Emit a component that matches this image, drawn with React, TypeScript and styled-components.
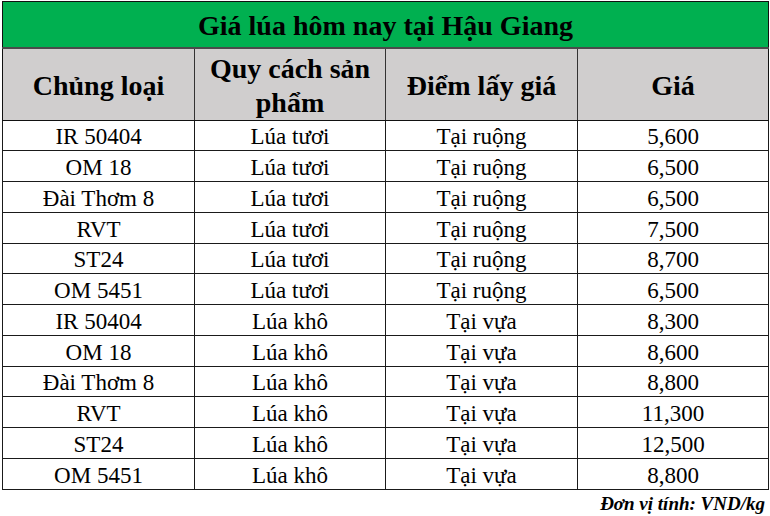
import React from "react";
import styled, { createGlobalStyle } from "styled-components";

const SERIF = "'Liberation Serif', serif";

const Global = createGlobalStyle`
  html, body { margin: 0; padding: 0; background: #ffffff; }
  body { font-family: ${SERIF}; color: #000; }
`;

const Page = styled.div`
  width: 766px;
  padding: 1px 0 0 2px;
  font-family: ${SERIF};
`;

const Table = styled.table`
  width: 766px;
  border-collapse: collapse;
  table-layout: fixed;
  border: 1.5px solid #111;
  font-family: ${SERIF};
`;

const TitleCell = styled.th`
  box-sizing: border-box;
  height: 46px;
  background: #00b050;
  font-family: ${SERIF};
  font-size: 28px;
  font-weight: 700;
  text-align: center;
  padding: 3px 0 0;
  border-bottom: 2px solid #4a4a4a;
  line-height: 1;
`;

const HeadCell = styled.th`
  box-sizing: border-box;
  height: 70px;
  background: #d0cece;
  font-family: ${SERIF};
  font-size: 28px;
  font-weight: 700;
  line-height: 34px;
  text-align: center;
  padding: 3px 6px 0;
  border-left: 1.5px solid #333;
  border-bottom: 1.5px solid #111;
  &:first-child { border-left: none; }
`;

const Cell = styled.td`
  box-sizing: border-box;
  height: 30.75px;
  font-family: ${SERIF};
  font-size: 23px;
  line-height: 1;
  text-align: center;
  padding: 3px 4px 0;
  border: 1.5px solid #1a1a1a;
`;

const Note = styled.div`
  text-align: right;
  padding: 3px 3px 0 0;
  font-family: ${SERIF};
  font-size: 19px;
  font-weight: 700;
  font-style: italic;
  line-height: 1.15;
`;

type Row = [string, string, string, string];

const rows: Row[] = [
  ["IR 50404", "Lúa tươi", "Tại ruộng", "5,600"],
  ["OM 18", "Lúa tươi", "Tại ruộng", "6,500"],
  ["Đài Thơm 8", "Lúa tươi", "Tại ruộng", "6,500"],
  ["RVT", "Lúa tươi", "Tại ruộng", "7,500"],
  ["ST24", "Lúa tươi", "Tại ruộng", "8,700"],
  ["OM 5451", "Lúa tươi", "Tại ruộng", "6,500"],
  ["IR 50404", "Lúa khô", "Tại vựa", "8,300"],
  ["OM 18", "Lúa khô", "Tại vựa", "8,600"],
  ["Đài Thơm 8", "Lúa khô", "Tại vựa", "8,800"],
  ["RVT", "Lúa khô", "Tại vựa", "11,300"],
  ["ST24", "Lúa khô", "Tại vựa", "12,500"],
  ["OM 5451", "Lúa khô", "Tại vựa", "8,800"],
];

export default function App() {
  return (
    <>
      <Global />
      <Page>
        <Table>
          <colgroup>
            <col style={{ width: "192px" }} />
            <col style={{ width: "191px" }} />
            <col style={{ width: "192px" }} />
            <col style={{ width: "191px" }} />
          </colgroup>
          <thead>
            <tr>
              <TitleCell colSpan={4}>Giá lúa hôm nay tại Hậu Giang</TitleCell>
            </tr>
            <tr>
              <HeadCell>Chủng loại</HeadCell>
              <HeadCell>Quy cách sản phẩm</HeadCell>
              <HeadCell>Điểm lấy giá</HeadCell>
              <HeadCell>Giá</HeadCell>
            </tr>
          </thead>
          <tbody>
            {rows.map((r, i) => (
              <tr key={i}>
                {r.map((c, j) => (
                  <Cell key={j}>{c}</Cell>
                ))}
              </tr>
            ))}
          </tbody>
        </Table>
        <Note>Đơn vị tính: VND/kg</Note>
      </Page>
    </>
  );
}
